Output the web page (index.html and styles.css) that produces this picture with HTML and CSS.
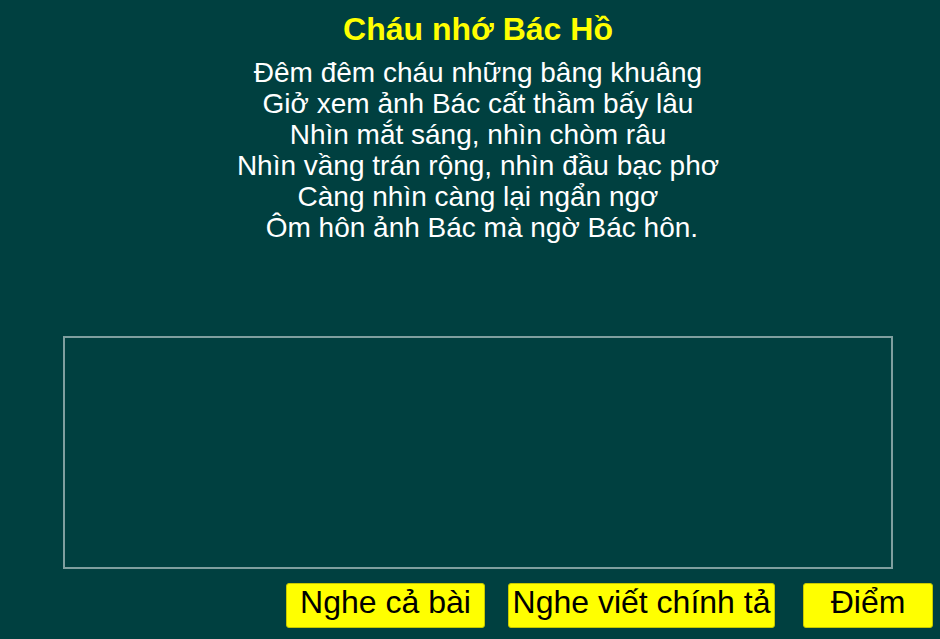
FILE: index.html
```html
<!DOCTYPE html>
<html lang="vi">
<head>
<meta charset="utf-8">
<title>Cháu nhớ Bác Hồ</title>
<link rel="stylesheet" href="styles.css">
</head>
<body>
<div class="page">
  <header class="head">
    <h1 class="title">Cháu nhớ Bác Hồ</h1>
    <div class="poem">
      <div>Đêm đêm cháu những bâng khuâng</div>
      <div>Giở xem ảnh Bác cất thầm bấy lâu</div>
      <div>Nhìn mắt sáng, nhìn chòm râu</div>
      <div>Nhìn vầng trán rộng, nhìn đầu bạc phơ</div>
      <div>Càng nhìn càng lại ngẩn ngơ</div>
      <div>&nbsp;Ôm hôn ảnh Bác mà ngờ Bác hôn.</div>
    </div>
  </header>
  <div class="answer"></div>
  <div class="buttons">
    <button class="btn btn-all">Nghe cả bài</button>
    <button class="btn btn-dict">Nghe viết chính tả</button>
    <button class="btn btn-score">Điểm</button>
  </div>
</div>
</body>
</html>
```
FILE: styles.css
```css
html, body {
  margin: 0;
  padding: 0;
  background: #004040;
  height: 100%;
}
.page {
  width: 940px;
  height: 639px;
  font-family: "Liberation Sans", Arial, sans-serif;
  display: flex;
  flex-direction: column;
}
.head {
  padding-left: 16px;
}
.title {
  margin: 11px 0 0 0;
  color: #ffff00;
  font-size: 32px;
  font-weight: bold;
  text-align: center;
  line-height: 36px;
}
.poem {
  margin-top: 10px;
  color: #ffffff;
  font-size: 28px;
  line-height: 31px;
  text-align: center;
}
.answer {
  margin: 93px 0 0 63px;
  width: 826px;
  height: 229px;
  border: 2px solid #7f9f9f;
  box-sizing: content-box;
}
.buttons {
  display: flex;
  margin: 14px 0 0 286px;
}
.btn {
  box-sizing: border-box;
  height: 45px;
  background: #ffff00;
  border: 1px solid #c8c800;
  border-radius: 3px;
  font-family: "Liberation Sans", Arial, sans-serif;
  font-size: 32px;
  color: #000;
  padding: 0 0 7px 0;
  line-height: 36px;
  white-space: nowrap;
  overflow: visible;
  display: flex;
  justify-content: center;
  align-items: center;
}
.btn-all { width: 199px; }
.btn-dict { width: 267px; margin-left: 23px; }
.btn-score { width: 130px; margin-left: 28px; }
```
